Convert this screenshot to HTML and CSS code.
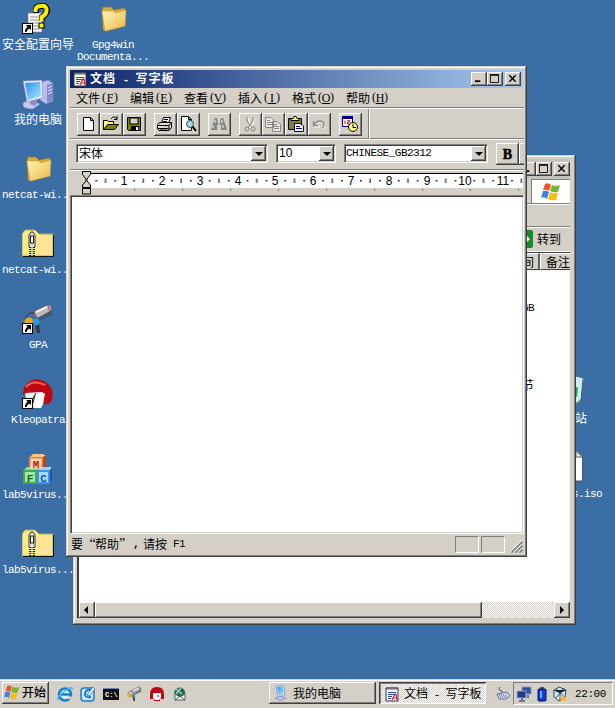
FILE: index.html
```html
<!DOCTYPE html>
<html lang="zh-CN">
<head>
<meta charset="utf-8">
<title>桌面</title>
<link rel="stylesheet" href="styles.css">
</head>
<body>
<svg class="defs" width="0" height="0">
  <defs>
    <linearGradient id="gold" x1="0" y1="0" x2="1" y2="1"><stop offset="0" stop-color="#fff6b8"/><stop offset="1" stop-color="#edb84a"/></linearGradient>
    <linearGradient id="screen" x1="0" y1="0" x2="1" y2="1"><stop offset="0" stop-color="#2f8df0"/><stop offset="1" stop-color="#a8ecff"/></linearGradient>
    <symbol id="folder" viewBox="0 0 32 32">
      <path d="M5 7 L6 4 L14 4 L17 7 L28 5 L28 23 L9 28 L6 27Z" fill="#d9a93c" stroke="#8b742c" stroke-width=".6"/>
      <path d="M5 8 L16 8 L19 10 L29 7 L28 23 L8 28Z" fill="url(#gold)" stroke="#d3a53d" stroke-width=".6"/>
    </symbol>
    <symbol id="zip" viewBox="0 0 32 32">
      <path d="M0 6 L3 2 L13 2 L17 6 L31 6 L31 28 L0 28Z" fill="#f6eb8a" stroke="#b6a34b"/>
      <path d="M31.5 7 V28.5 H1" fill="none" stroke="#111"/>
      <path d="M17 8H30V27H13V10Z" fill="#ffe19a" opacity=".7"/>
      <path d="M7 19V7L9 4H11L13 7V19" fill="#ddd" stroke="#333" stroke-width="1"/>
      <rect x="8.5" y="8" width="3" height="7" fill="#f8f8d0" stroke="#222"/>
      <path d="M10 19V28" stroke="#222" stroke-width="6" stroke-dasharray="1 1"/>
      <path d="M10 19V28" stroke="#ccc" stroke-width="1.6"/>
    </symbol>
    <symbol id="arrow" viewBox="0 0 11 11">
      <rect x=".5" y=".5" width="10" height="10" fill="#fff" stroke="#000"/>
      <path d="M4 2H9V7L7.3 5.4Q4.6 7 4.6 9H3Q2.6 6 5.6 3.8Z" fill="#000"/>
    </symbol>
    <symbol id="pc" viewBox="0 0 32 32">
      <path d="M19 4 L26 2 L31 5 V23 L24 26 L18 22Z" fill="#b9bfe8" stroke="#7279b8" stroke-width=".7"/>
      <path d="M25 7V25L31 22V5Z" fill="#8188ce"/>
      <path d="M26 10L30 8M26 13L30 11M26 16L30 14" stroke="#dfe4ff" stroke-width="1"/>
      <path d="M1 25 L8 21 L18 26 L11 31 Q3 31 1 28Z" fill="#c6cbed" stroke="#7b80b6" stroke-width=".6"/>
      <path d="M8 21H15V26L12 28L8 26Z" fill="#878fc7"/>
      <path d="M1 3 L20 2 L21 20 L5 24Z" fill="#e6e9fa" stroke="#7d86bd" stroke-width=".6"/>
      <path d="M3 5 L18 4 L19 18 L6 22Z" fill="url(#screen)"/>
    </symbol>
    <symbol id="pc-small" viewBox="0 0 16 16">
      <path d="M3 1L11 0L12 10L5 12Z" fill="#dfeaff" stroke="#6b86c0" stroke-width=".7"/><path d="M4 2L10 1.5L11 9L6 10.5Z" fill="url(#screen)"/>
      <path d="M2 13L7 11L13 13L8 16Z" fill="#b9c2e4" stroke="#737fae" stroke-width=".6"/>
    </symbol>
    <symbol id="wizard" viewBox="0 0 32 32">
      <path d="M6 10H20V29H6Z" fill="#fff" stroke="#777" stroke-width=".7"/>
      <path d="M8 14H17M8 17H17M8 20H17M8 23H17M8 26H17" stroke="#888"/>
      <path d="M14 10V7Q14 3 19 3Q25 2 25 8Q24 12 20 14V18" fill="none" stroke="#000" stroke-width="6"/>
      <path d="M13.5 9V7Q14 3 19 3Q25 2 24.500 8Q24 12 19.500 14V18" fill="none" stroke="#ffef00" stroke-width="4"/>
      <rect x="17" y="20" width="5" height="5" fill="#ffef00" stroke="#000"/>
    </symbol>
    <symbol id="gpa" viewBox="0 0 32 32">
      <path d="M14 14L29 6L31 11L17 18Z" fill="#444b5c" opacity=".7"/>
      <path d="M11 9 L25 2 Q29 1 30 6 L29 8 L16 15 Q12 14 11 9Z" fill="#b8b8bd" stroke="#555969"/>
      <path d="M14 9L25 4" stroke="#f3f3f4" stroke-width="2"/>
      <path d="M12 9L14 13M26 3L28 8" stroke="#d02940" stroke-width="1"/>
      <path d="M12 10Q6 8 3 17" fill="none" stroke="#323746"/>
      <circle cx="7" cy="19" r="4.5" fill="#f8a51a"/><path d="M12 17L15 30H18L17 19Z" fill="#323b45"/>
      <circle cx="14" cy="19" r="3.5" fill="#2c99d9"/>
    </symbol>
    <symbol id="kleo" viewBox="0 0 32 32">
      <path d="M1 16 Q1 6 10 2 Q20 -1 28 8 Q33 15 29 24 Q26 27 22 26 L21 16 L3 17Z" fill="#bd0712"/>
      <path d="M4 9Q11 1 23 7" fill="none" stroke="#ed675d" stroke-width="2"/>
      <path d="M3 15 L20 14 L23 16 L21 26 L19 30 H11L5 26Z" fill="#fff"/>
      <path d="M14 15L9 24M13 17L11 25" stroke="#222" stroke-width="1"/>
    </symbol>
    <symbol id="mfc" viewBox="0 0 32 32">
      <path d="M8 4L11 1H21L24 3V16H8Z" fill="#ffc58d"/><rect x="7" y="4" width="14" height="13" fill="#ef7d35"/><path d="M21 4L24 2V15L21 17Z" fill="#ad491d"/>
      <path d="M2 17L5 14H15V30H2Z" fill="#91dc94"/><rect x="1" y="17" width="14" height="14" fill="#3eaa52"/>
      <path d="M16 17L19 14H30V28L27 31Z" fill="#9bd5ff"/><rect x="15" y="17" width="13" height="14" fill="#3f91e7"/><path d="M28 17L30 14V28L28 31Z" fill="#1c559b"/>
      <rect x="8.500" y="5.500" width="11" height="10" fill="#ffdcb3"/><rect x="3" y="19" width="10" height="10" fill="#a8e4a5"/><rect x="17" y="19" width="9" height="10" fill="#a6d8ff"/>
      <text x="14" y="15" class="block-letter red">M</text><text x="8" y="28.500" class="block-letter green">F</text><text x="21.500" y="28.500" class="block-letter blue">C</text>
    </symbol>
    <symbol id="wordpad" viewBox="0 0 14 16">
      <path d="M1 2H13V15H1Z" fill="#fff" stroke="#33344f"/><path d="M2 1V4M4 1V4M6 1V4M8 1V4M10 1V4M12 1V4" stroke="#555"/>
      <path d="M3 6.5H11M3 8.5H11M3 10.5H7M3 12.5H6" stroke="#244bb0"/>
      <path d="M7 14L10 8H11L12 14M8.5 12H12" stroke="#df1624" stroke-width="1.2" fill="none"/>
    </symbol>
    <symbol id="flag" viewBox="0 0 20 18">
      <path d="M4 1Q7 -1 10 2L8 8Q5 6 2 7Z" fill="#f05424"/><path d="M11 2Q15 4 19 2L17 9Q13 10 9 8Z" fill="#72b82a"/>
      <path d="M2 8Q5 7 8 9L6 16Q3 13 0 15Z" fill="#3b83df"/><path d="M9 9Q13 11 17 10L15 17Q11 18 7 16Z" fill="#f9bd18"/>
    </symbol>
  </defs>
</svg>

<main class="desktop">
  <section class="column first">
    <div class="shortcut"><div class="pic"><svg><use href="#wizard"/></svg><svg class="link"><use href="#arrow"/></svg></div><span class="cjk">安全配置向导</span></div>
    <div class="shortcut"><div class="pic"><svg><use href="#pc"/></svg></div><span class="cjk">我的电脑</span></div>
    <div class="shortcut"><div class="pic"><svg><use href="#folder"/></svg></div><span>netcat-wi...</span></div>
    <div class="shortcut"><div class="pic"><svg><use href="#zip"/></svg></div><span>netcat-wi...</span></div>
    <div class="shortcut"><div class="pic"><svg><use href="#gpa"/></svg><svg class="link"><use href="#arrow"/></svg></div><span>GPA</span></div>
    <div class="shortcut"><div class="pic"><svg><use href="#kleo"/></svg><svg class="link"><use href="#arrow"/></svg></div><span>Kleopatra</span></div>
    <div class="shortcut"><div class="pic"><svg><use href="#mfc"/></svg></div><span>lab5virus...</span></div>
    <div class="shortcut"><div class="pic"><svg><use href="#zip"/></svg></div><span>lab5virus...</span></div>
  </section>
  <section class="column second">
    <div class="shortcut"><div class="pic"><svg><use href="#folder"/></svg></div><span>Gpg4win<br>Documenta...</span></div>
  </section>
  <section class="column third">
    <div class="shortcut"><div class="edge-pic"><svg width="10" height="32" viewBox="0 0 10 32"><path d="M0 2L8 4L5 26L0 29Z" fill="#cdeef0" stroke="#eaffff"/><path d="M8 4L6 25L0 29" fill="none" stroke="#315d69"/><path d="M0 11L3 13L2 22H0Z" fill="#28a745"/></svg></div><span class="cjk">站</span></div>
    <div class="shortcut"><div class="edge-pic"><svg width="10" height="32" viewBox="0 0 10 32"><path d="M0 1H2L7.500 7V31H0Z" fill="#fff"/><path d="M1 1V7H7.500V31H0M1 1L7.500 7" fill="none" stroke="#555"/></svg></div><span>s.iso</span></div>
  </section>

  <section class="window explorer">
    <header class="titlebar inactive"><div class="caps"><i class="cap"><svg viewBox="0 0 12 10"><path d="M2 8H8" stroke="#000" stroke-width="2"/></svg></i><i class="cap"><svg viewBox="0 0 12 10"><path d="M1.5 .5H10.5V9.5H1.5ZM1 1.5H11" fill="none" stroke="#000"/></svg></i><i class="cap close"><svg viewBox="0 0 12 10"><path d="M2.5 1.5L9.5 8.5M9.5 1.5L2.5 8.5" stroke="#000" stroke-width="1.6"/></svg></i></div></header>
    <div class="logo-row"><div class="logo"><svg width="20" height="18"><use href="#flag"/></svg></div></div>
    <div class="blank-row"></div>
    <div class="go-row"><i class="go"><svg width="7" height="18" viewBox="0 0 7 18"><path d="M0 4L5 9L0 14Z" fill="#fff"/></svg></i><span class="cjk">转到</span></div>
    <div class="heads"><b class="cjk">间</b><b class="cjk">备注</b></div>
    <div class="list"><span>GB</span><span class="cjk">节</span></div>
    <div class="scrollbar"><i class="sb"><svg viewBox="0 0 16 16"><path d="M9 4V12L5 8Z"/></svg></i><i class="thumb"></i><i class="sb end"><svg viewBox="0 0 16 16"><path d="M6 4V12L10 8Z"/></svg></i></div>
  </section>

  <section class="window wordpad">
    <header class="titlebar"><svg width="14" height="16"><use href="#wordpad"/></svg><h1>文档 <em>-</em> 写字板</h1><div class="caps"><i class="cap"><svg viewBox="0 0 12 10"><path d="M2 8H8" stroke="#000" stroke-width="2"/></svg></i><i class="cap"><svg viewBox="0 0 12 10"><path d="M1.5 .5H10.5V9.5H1.5ZM1 1.5H11" fill="none" stroke="#000"/></svg></i><i class="cap close"><svg viewBox="0 0 12 10"><path d="M2.5 1.5L9.5 8.5M9.5 1.5L2.5 8.5" stroke="#000" stroke-width="1.6"/></svg></i></div></header>
    <nav class="menu"><span>文件<em>(<u>F</u>)</em></span><span>编辑<em>(<u>E</u>)</em></span><span>查看<em>(<u>V</u>)</em></span><span>插入<em>(<u>I</u>)</em></span><span>格式<em>(<u>O</u>)</em></span><span>帮助<em>(<u>H</u>)</em></span></nav>
    <div class="toolbar">
      <div class="group">
        <i class="tool"><svg viewBox="0 0 18 18"><path d="M4.5 2.5H11.5L14.5 5.5V15.5H4.5ZM11.5 2.5V5.5H14.5" fill="#fff" stroke="#000"/></svg></i>
        <i class="tool"><svg viewBox="0 0 18 18"><path d="M1.5 14.5V5.5H5.5L6.5 6.5H11.5V9.5" fill="#ffff65" stroke="#000"/><path d="M1.5 14.5L5.5 9.5H16.5L12.5 14.5Z" fill="#808000" stroke="#000"/><path d="M9 4Q12 0 15 4M15 1V4.5H12" fill="none" stroke="#000"/></svg></i>
        <i class="tool"><svg viewBox="0 0 18 18"><path d="M2.5 2.5H15.5V15.5H3.5L2.5 14.5Z" fill="#808000" stroke="#000"/><path d="M5 3H13V9H5Z" fill="#d4d0c8" stroke="#000"/><path d="M6 11H14V16H6Z" fill="#000"/><path d="M11 12H13V15H11Z" fill="#fff"/></svg></i>
      </div>
      <div class="group">
        <i class="tool"><svg viewBox="0 0 18 18"><path d="M5.5 8L7.5 2.5H14.5L12.5 8" fill="#fff" stroke="#000"/><path d="M8 4.5H12M7 6.5H11" stroke="#000"/><path d="M1.5 9.5L4 7.5H15.5V12.5L13 15.5H3L1.5 13.5Z" fill="#ddd" stroke="#000"/><path d="M2 10.5H13V15M2 13.5H13M13 10L16 8M4 15H11" fill="none" stroke="#000"/><path d="M8 12H11" stroke="#e3df18"/></svg></i>
        <i class="tool"><svg viewBox="0 0 18 18"><path d="M2.5 1.5H9.5L12.5 4.5V15.5H2.5ZM9.5 1.5V4.5H12.5" fill="#fff" stroke="#000"/><circle cx="11" cy="9" r="3.5" fill="#96e4e4" stroke="#444"/><path d="M13.5 11.5L17 16" stroke="#000" stroke-width="2"/></svg></i>
      </div>
      <div class="group"><i class="tool"><svg viewBox="0 0 18 18"><path d="M3 8L5 3H7L8 8H10L11 3H13L15 8L17 15H11V10H7V15H1Z" fill="#888"/><path d="M3 10V13M5 5V8M12 5V8M13 10V13M8 9H10" stroke="#eee"/></svg></i></div>
      <div class="group">
        <i class="tool"><svg viewBox="0 0 18 18"><path d="M7 2V6L11 12M12 2V6L8 12" fill="none" stroke="#fff" transform="translate(1 1)"/><path d="M6 2V6L11 12M12 2V6L7 12" fill="none" stroke="#858585"/><circle cx="6" cy="14" r="2" fill="none" stroke="#858585"/><circle cx="12" cy="14" r="2" fill="none" stroke="#858585"/></svg></i>
        <i class="tool"><svg viewBox="0 0 18 18"><path d="M1.5 2.5H7L9.5 5V12.5H1.5ZM8.5 6.5H13L16.5 9V16.5H8.5Z" fill="#e8e6e1" stroke="#888"/><path d="M3 5.5H6M3 7.5H8M3 9.5H8M10 9.5H13M10 11.5H15M10 13.5H15" stroke="#888"/></svg></i>
        <i class="tool"><svg viewBox="0 0 18 18"><path d="M1.5 3.5H14.5V14.5H1.5Z" fill="#808040" stroke="#000"/><path d="M4 5.5V3.5H6L7 1.5H9L10 3.5H12V5.5Z" fill="#ffff54" stroke="#000"/><path d="M7.5 8.5H13L16.5 11V16.5H7.5Z" fill="#fff" stroke="#000080"/><path d="M9 11.5H13M9 13.5H15" stroke="#000080"/></svg></i>
        <i class="tool"><svg viewBox="0 0 18 18"><path d="M4 6V11H9M4 10Q8 4 13 7Q15 9 13 13" fill="none" stroke="#fff" transform="translate(1 1)"/><path d="M3.5 6V10.5H8M4 10Q8 4 13 7Q15 9 13 13" fill="none" stroke="#888" stroke-width="1.3"/></svg></i>
      </div>
      <div class="group"><i class="tool"><svg viewBox="0 0 18 18"><path d="M1.5 1.5H11.5V11.5H1.5Z" fill="#fff" stroke="#000080"/><path d="M1 2.5H12" stroke="#000080" stroke-width="3"/><path d="M4 5.5V9M6.5 5.5H8.5V7H6.5V9H9" stroke="#c3122b" fill="none"/><circle cx="12" cy="12" r="4.5" fill="#ffff85" stroke="#000"/><path d="M12 9V12.5H15" fill="none" stroke="#000"/></svg></i></div>
      <div class="toolbar-end"></div>
    </div>
    <div class="format"><div class="combo face"><span class="cjk">宋体</span><i></i></div><div class="combo size"><span class="sans">10</span><i></i></div><div class="combo charset"><span>CHINESE_GB2312</span><i></i></div><button>B</button><button class="cut"></button></div>
    <div class="ruler">
      <svg width="453" height="24" viewBox="0 0 453 24">
        <defs><pattern id="marks" x="16.5" y="0" width="37.8" height="24" patternUnits="userSpaceOnUse"><path d="M9 9H10.5V10.5H9ZM18.5 7.5H19.5V12H18.5ZM28 9H29.5V10.5H28Z" fill="#000"/></pattern><pattern id="stops" x="64" y="0" width="48" height="24" patternUnits="userSpaceOnUse"><path d="M0 18H1V20H0Z" fill="#777"/></pattern></defs>
        <rect x="17" y="3" width="436" height="14" fill="#fff"/><rect x="17" y="2" width="436" height="1" fill="#000"/><rect x="22" y="3" width="431" height="14" fill="url(#marks)"/><rect x="60" y="17" width="393" height="4" fill="url(#stops)"/>
        <g class="numbers"><text x="54" y="14">1</text><text x="92" y="14">2</text><text x="130" y="14">3</text><text x="168" y="14">4</text><text x="205" y="14">5</text><text x="243" y="14">6</text><text x="281" y="14">7</text><text x="319" y="14">8</text><text x="357" y="14">9</text><text x="395" y="14">10</text><text x="433" y="14">11</text></g>
        <path d="M12.5 .5H20.5V3.5L17 8V10L20.5 14V16.5H12.5V14L16 10V8L12.5 3.5ZM12.5 17.5H20.5V23H12.5Z" fill="#d4d0c8" stroke="#000"/>
      </svg>
    </div>
    <div class="editor"></div>
    <footer class="status"><span>要<em class="quote open">“</em>帮助<em class="quote">”</em><em class="comma">,</em>请按<em>&nbsp;F1</em></span><i class="pane"></i><i class="pane"></i><svg width="13" height="13" viewBox="0 0 13 13"><path d="M0 12L12 0M4 12L12 4M8 12L12 8" stroke="#fff"/><path d="M1.5 12.5L12.5 1.5M5.5 12.5L12.5 5.5M9.5 12.5L12.5 9.5" stroke="#808080" stroke-width="1.7"/></svg></footer>
  </section>
</main>

<footer class="taskbar">
  <div class="start"><svg width="16" height="15"><use href="#flag"/></svg><span>开始</span></div>
  <div class="quick">
    <svg viewBox="0 0 16 16"><circle cx="8" cy="8.5" r="6" fill="#d5f2ff" stroke="#1681cf" stroke-width="2.5"/><path d="M4 8.5H13" stroke="#1171bb" stroke-width="2.2"/><path d="M2 14Q-2 12 8 5Q16 -1 15 4" fill="none" stroke="#45b6ee" stroke-width="1.5"/><path d="M10 10.5H16V13H10Z" fill="#d4d0c8"/></svg>
    <svg viewBox="0 0 16 16"><rect x="1" y="2" width="13" height="13" rx="3" fill="#c4e7fa" stroke="#2479c6" stroke-width="1.5"/><path d="M12 5Q7 2 5 7Q4 12 11 11" fill="none" stroke="#1879c3" stroke-width="2"/><path d="M7 9L13 1L15 3L9 10Z" fill="#fff" stroke="#4083c2"/></svg>
    <svg viewBox="0 0 16 16"><rect y="2" width="16" height="12" fill="#111"/><path d="M0 2.5H16" stroke="#6d88c8"/><text x="2" y="11" class="prompt">C:\</text></svg>
    <svg viewBox="0 0 32 32"><use href="#gpa"/></svg>
    <svg viewBox="0 0 16 16"><path d="M1 8Q1 1 8 1Q15 1 15 8V13H11V15H5V13H1Z" fill="#bd0712"/><path d="M4 7H12V12L10 14H6L4 12Z" fill="#fff"/><path d="M8 10H10" stroke="#222"/></svg>
    <svg viewBox="0 0 16 16"><path d="M2 6Q5 0 10 2Q14 4 13 9L9 12L3 9Z" fill="#29684d"/><path d="M4 3L10 8M9 2L4 8" stroke="#9bcad3" stroke-width="1.6"/><path d="M3 8L8 11L13 8V14H3Z" fill="#fff" stroke="#4d6155"/><path d="M3 14L8 10L13 14" fill="none" stroke="#555"/></svg>
  </div>
  <div class="tasks"><div class="task"><svg width="16" height="16"><use href="#pc-small"/></svg><span>我的电脑</span></div><div class="task active"><svg width="14" height="16"><use href="#wordpad"/></svg><span>文档 <em>-</em> 写字板</span></div></div>
  <svg class="keyboard" width="14" height="15" viewBox="0 0 14 15"><path d="M6 8V5Q1 4 4 1" fill="none" stroke="#4e5678"/><path d="M1 8L11 6L14 10L10 13H3Z" fill="#cfd7ef" stroke="#6d7392"/><path d="M3 9H11M4 11H11" stroke="#4b5277" stroke-dasharray="1 1"/></svg>
  <div class="tray">
    <svg viewBox="0 0 16 16"><path d="M6 1H15V8H6Z" fill="#314d9d" stroke="#8996c3"/><path d="M1 5H10V12H1Z" fill="#213a82" stroke="#9da8cf"/><path d="M3 15H9M6 12V15M12 9V12" stroke="#68709b" stroke-width="2"/></svg>
    <svg viewBox="0 0 16 16"><path d="M6 1H10V3H6Z" fill="#555"/><rect x="4" y="3" width="8" height="12" rx="1" fill="#1636d5" stroke="#071260"/><path d="M6 5H8V12H6Z" fill="#49c0fa"/></svg>
    <svg viewBox="0 0 16 16"><path d="M2 4L7 1L14 4L13 11L7 15L2 11Z" fill="#d9e8f2" stroke="#24506a"/><path d="M2 4L8 7L14 4M8 7V14M4 2L12 11M12 2L4 12" stroke="#24506a"/><path d="M11 8L12 11L15 11L13 13L14 16L11 14L8 16L9 13L7 11H10Z" fill="#f7b728"/></svg>
    <time>22:00</time>
  </div>
</footer>
</body>
</html>
```
FILE: styles.css
```css
* { box-sizing: border-box; }
body { margin: 0; width: 615px; height: 708px; overflow: hidden; display: flex; flex-direction: column; background: #3a6ea5; color: #000; font: 12px/14px "Noto Sans CJK SC", sans-serif; }
.defs { position: absolute; }
svg { display: block; flex: none; }
i, em { font-style: normal; }
.desktop { position: relative; height: 679px; overflow: hidden; }
.column { position: absolute; display: flex; flex-direction: column; top: 3px; }
.first { left: 0; width: 76px; }
.second { left: 75px; width: 76px; }
.third { left: 575px; top: 375px; width: 40px; }
.shortcut { height: 75px; display: flex; flex-direction: column; align-items: center; color: #fff; }
.shortcut > span, .list > span { font: 11px/12px "Liberation Mono", monospace; letter-spacing: -.6px; white-space: pre; }
.shortcut > span { text-align: center; padding-top: 1px; }
.shortcut > .cjk, .list > .cjk { font: 12px/14px "Noto Sans CJK SC", sans-serif; letter-spacing: 0; }
.shortcut > .cjk { padding: 0; margin-top: -1px; }
.pic { position: relative; width: 32px; height: 35px; }
.pic svg { width: 32px; height: 32px; }
.pic .link { position: absolute; left: 0; bottom: 4px; width: 11px; height: 11px; }
.third .shortcut { align-items: flex-start; }
.third .shortcut > span { margin-left: -3px; }
.third .shortcut > .cjk { margin-left: 0; }
.edge-pic { height: 37px; }
.window { position: absolute; display: flex; flex-direction: column; padding: 4px 3px 3px 4px; background: #d4d0c8; box-shadow: inset -1px -1px #404040, inset 1px 1px #d4d0c8, inset -2px -2px #808080, inset 2px 2px #fff; }
.wordpad { left: 66px; top: 66px; width: 461px; height: 491px; }
.explorer { left: 73px; top: 155px; width: 503px; height: 470px; padding: 4px 6px 7px 4px; }
.titlebar { flex: none; height: 18px; display: flex; align-items: center; padding: 0 2px; background: linear-gradient(90deg, #0a246a, #a6caf0); color: #fff; margin-right: 1px; }
.titlebar.inactive { height: 20px; padding-right: 0; margin: 0; background: #c4c2bd; }
.titlebar > svg { margin-left: 1px; }
.titlebar h1 { margin: 0 0 0 3px; font: bold 12px/16px "Noto Sans CJK SC", sans-serif; letter-spacing: 1px; white-space: pre; }
h1 em, .task em { display: inline-block; width: 12px; text-align: center; }
.caps { margin-left: auto; display: flex; }
.cap { width: 16px; height: 14px; padding: 2px; background: #d4d0c8; box-shadow: inset -1px -1px #404040, inset 1px 1px #fff, inset -2px -2px #808080; }
.cap svg { width: 11px; height: 9px; }
.close { margin-left: 2px; }
.menu { flex: none; height: 20px; display: flex; padding-left: 6px; line-height: 19px; border-bottom: 1px solid #808080; }
.menu span { display: flex; width: 54px; }
em { font-family: "Liberation Mono", monospace; font-size: 11px; letter-spacing: -.6px; }
.menu em { font-family: "Liberation Serif", serif; font-size: 12px; display: flex; letter-spacing: 0; padding-left: 2px; }
.menu em u { width: 8px; display: flex; justify-content: center; text-decoration: none; line-height: 10px; height: 11px; margin-top: 5px; border-bottom: 1px solid; }
.toolbar { flex: none; height: 31px; display: flex; align-items: flex-start; gap: 8px; padding: 4px 0 0 7px; border-top: 1px solid #fff; border-bottom: 1px solid #808080; }
.group { display: flex; }
.tool { width: 23px; height: 23px; padding: 2px; box-shadow: inset -1px -1px #404040, inset 1px 1px #fff, inset -2px -2px #808080; }
.tool svg { width: 18px; height: 18px; }
.toolbar-end { width: 2px; height: 30px; margin: -4px 0 0 -2px; border-left: 1px solid #808080; border-right: 1px solid #fff; }
.format { flex: none; height: 31px; display: flex; padding: 4px 0 0 6px; border-top: 1px solid #fff; border-bottom: 1px solid #808080; overflow: hidden; }
.combo { flex: none; height: 19px; display: flex; justify-content: space-between; background: #fff; border: 1px solid; border-color: #808080 #fff #fff #808080; box-shadow: inset 1px 1px #404040, inset -1px -1px #d4d0c8; padding: 1px 1px 1px 2px; line-height: 14px; }
.combo i { width: 15px; height: 15px; background: #d4d0c8; box-shadow: inset -1px -1px #404040, inset 1px 1px #fff, inset -2px -2px #808080; display: flex; align-items: center; justify-content: center; }
.combo i::before { content: ""; border: 4px solid transparent; border-top-color: #000; border-bottom: 0; }
.face { width: 192px; }
.size { width: 60px; margin-left: 8px; }
.charset { width: 144px; margin-left: 8px; padding-left: 1px; }
.combo .sans { font: 12px/15px "Liberation Sans", sans-serif; }
.charset span { font: 11px/15px "Liberation Mono", monospace; letter-spacing: -.5px; }
.format button { flex: none; width: 23px; height: 22px; margin: -1px 0 0 8px; border: 0; padding: 1px 0 0; background: transparent; font: 900 14px/20px "Liberation Serif", serif; -webkit-text-stroke: .5px #000; box-shadow: inset -1px -1px #404040, inset 1px 1px #fff, inset -2px -2px #808080; }
.format .cut { margin-left: 0; }
.ruler { flex: none; height: 25px; border-top: 1px solid #fff; }
.numbers { font: 12px "Liberation Sans", sans-serif; text-anchor: middle; }
.editor { flex: 1; background: #fff; border: 1px solid; border-color: #808080 #fff #fff #808080; box-shadow: inset 1px 1px #404040, inset -1px -1px #d4d0c8; }
.status { flex: none; height: 20px; display: flex; align-items: center; gap: 2px; padding-right: 1px; }
.status span { margin: 0 auto 0 1px; display: flex; line-height: 16px; }
.status .quote { width: 12px; font-family: "Liberation Serif", serif; font-size: 14px; }
.status .open { text-align: right; }
.status .comma { width: 12px; padding-left: 2px; font-weight: bold; }
.pane { width: 24px; height: 17px; border: 1px solid; border-color: #808080 #fff #fff #808080; }
.status svg { margin: 5px 0 0 3px; }
.logo-row { flex: none; height: 25px; background: #d4d0c8; border-bottom: 1px solid #808080; display: flex; justify-content: flex-end; }
.logo { width: 39px; background: #fff; display: grid; place-items: center; border-left: 1px solid #808080; border-top: 1px solid #808080; }
.blank-row { flex: none; height: 23px; border-top: 1px solid #fff; border-bottom: 1px solid #808080; }
.go-row { flex: none; height: 25px; border-top: 1px solid #fff; border-bottom: 1px solid #fff; display: flex; align-items: center; justify-content: flex-end; gap: 4px; padding: 0 9px 2px 0; }
.go { width: 8px; height: 18px; background: #148b24; border-radius: 0 2px 2px 0; }
.heads { flex: none; height: 18px; display: flex; justify-content: flex-end; border-top: 1px solid #404040; overflow: hidden; }
.heads b { font-weight: normal; height: 17px; line-height: 15px; border: 1px solid; border-color: #fff #808080 #404040 #fff; }
.heads b:first-child { width: 18px; padding-right: 4px; direction: rtl; border-right: 2px solid #606060; }
.heads b:last-child { width: 30px; padding-left: 5px; border-right: 0; }
.list { flex: 1; background: #fff; border-left: 2px solid #404040; display: flex; flex-direction: column; align-items: flex-end; padding: 32px 36px 0 0; gap: 64px; }
.scrollbar { flex: none; height: 16px; display: flex; border-left: 2px solid #404040; background: repeating-conic-gradient(#d4d0c8 0 25%, #fff 0 50%) 0 0/2px 2px; }
.sb, .thumb { background: #d4d0c8; box-shadow: inset -1px -1px #404040, inset 1px 1px #fff, inset -2px -2px #808080; }
.sb { width: 16px; }
.thumb { width: 387px; }
.end { margin-left: auto; }
.taskbar { height: 29px; display: flex; align-items: flex-start; background: #d4d0c8; border-top: 1px solid #d4d0c8; box-shadow: inset 0 1px #fff; padding: 2px 2px 0; }
.start { width: 47px; height: 22px; display: flex; align-items: center; gap: 2px; padding: 0 0 2px 2px; font-weight: 500; box-shadow: inset -1px -1px #404040, inset 1px 1px #fff, inset -2px -2px #808080; }
.quick { display: flex; gap: 7px; padding: 4px 0 0 8px; width: 220px; }
.quick svg, .tray svg { width: 16px; height: 16px; }
.tasks { display: flex; gap: 3px; }
.task { width: 107px; height: 22px; display: flex; align-items: center; gap: 4px; padding-left: 4px; white-space: pre; box-shadow: inset -1px -1px #404040, inset 1px 1px #fff, inset -2px -2px #808080; }
.task.active { gap: 5px; padding: 1px 0 0 6px; background: repeating-conic-gradient(#d4d0c8 0 25%, #fff 0 50%) 0 0/2px 2px; box-shadow: inset 1px 1px #404040, inset -1px -1px #fff, inset 2px 2px #808080; }
.keyboard { margin: 4px 3px 0 10px; }
.tray { flex: 1; height: 23px; display: flex; align-items: center; gap: 2px; padding-left: 2px; border: 1px solid; border-color: #808080 #fff #fff #808080; }
.tray time { margin-left: 5px; font: 11px/16px "Liberation Mono", monospace; letter-spacing: -.4px; }
.block-letter { font: bold 11px "Liberation Mono", monospace; text-anchor: middle; }
.red { fill: #b81818; } .green { fill: #126a29; } .blue { fill: #174e9b; }
.prompt { font: bold 7px "Liberation Mono", monospace; fill: #fff; }
```
